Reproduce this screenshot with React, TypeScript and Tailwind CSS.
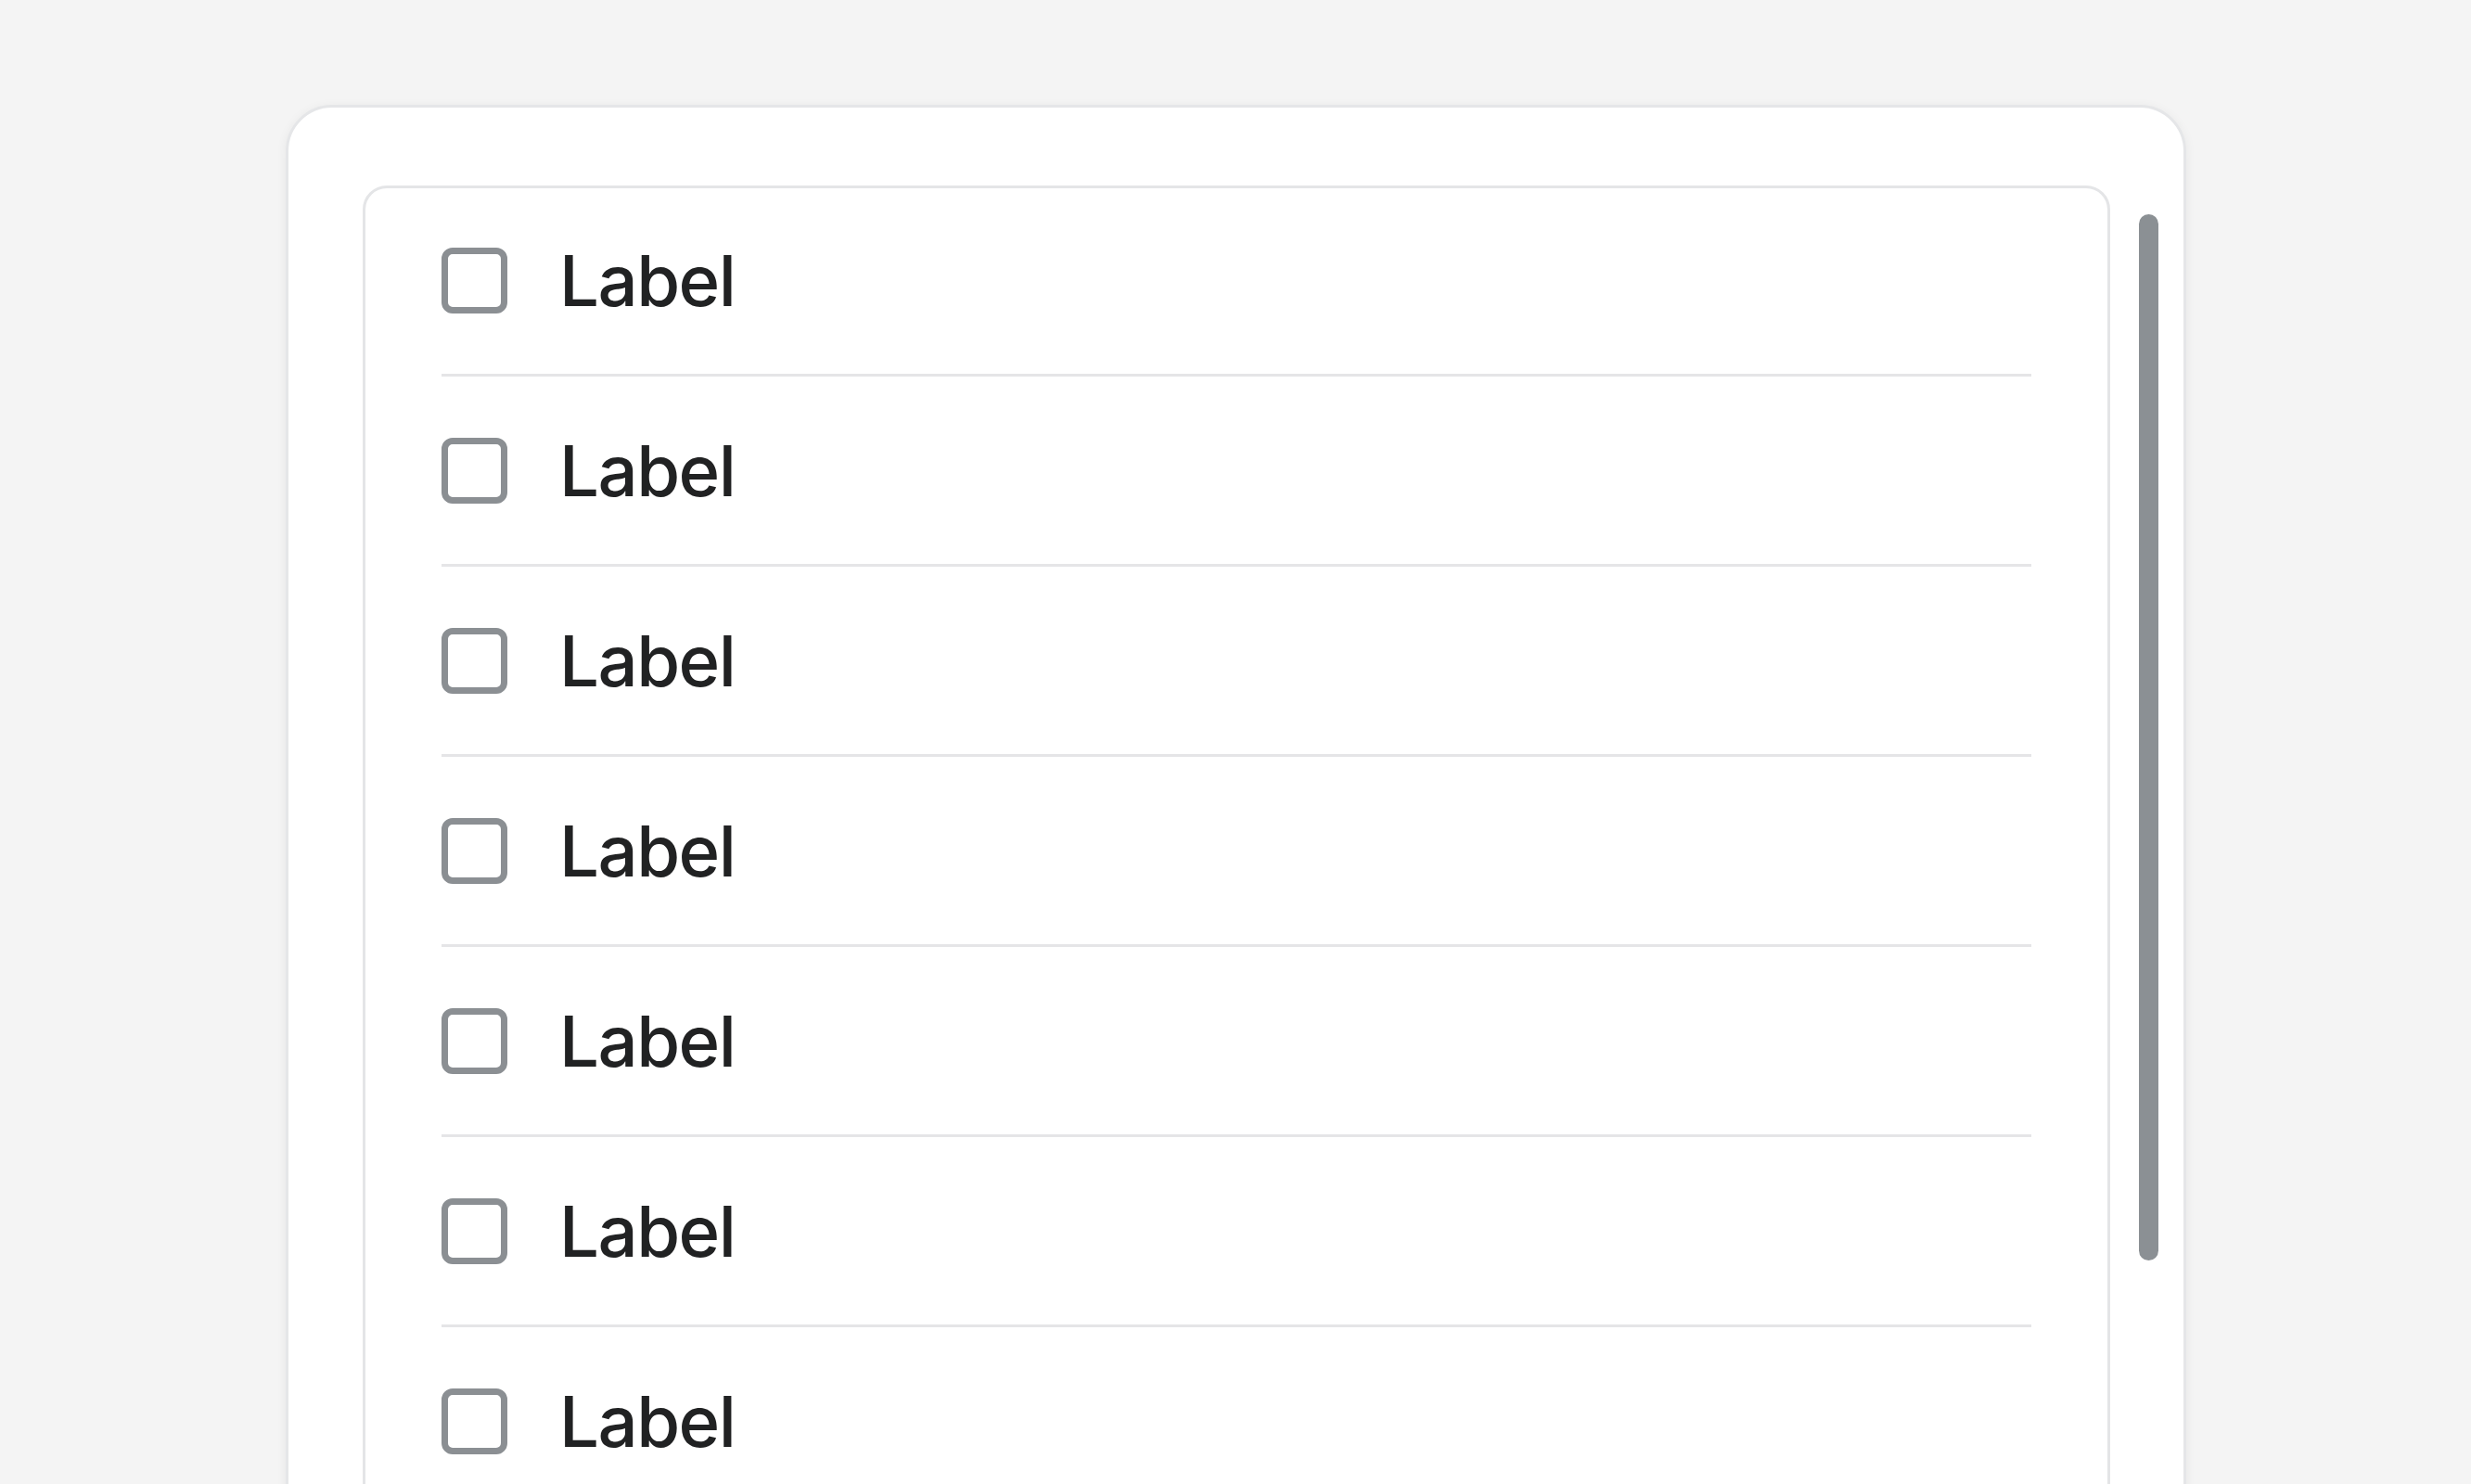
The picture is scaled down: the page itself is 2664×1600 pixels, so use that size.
import React from "react";

export default function App() {
  const rows = Array.from({ length: 8 });
  return (
    <div className="h-[1600px] w-[2664px] overflow-hidden bg-[#f4f4f4]" style={{ fontFamily: "Inter, 'Noto Sans', sans-serif" }}>
      <div className="ml-[308px] mt-[113px] w-[2049px] h-[1600px] rounded-[50px] border-[3px] border-[#e5e6e8] bg-white shadow-[0_2px_12px_rgba(0,0,0,0.06)] flex pl-[80px] pt-[84px]">
        <div className="w-[1884px] h-[1500px] rounded-[26px] border-[3px] border-[#e4e5e7] px-[82px] overflow-hidden">
          <div className="-mt-[2px]">
            {rows.map((_, i) => (
              <div key={i} className="h-[205px] flex items-center border-b-[3px] border-[#e5e5e7]">
                <div className="w-[71px] h-[71px] shrink-0 rounded-[12px] border-[7px] border-[#8b8f93]" />
                <span className="ml-[56px] text-[76px] font-medium tracking-[-1.5px] leading-none text-[#212223]">Label</span>
              </div>
            ))}
          </div>
        </div>
        <div className="ml-[31px] mt-[31px] w-[21px] h-[1128px] rounded-full bg-[#8b9094]" />
      </div>
    </div>
  );
}
